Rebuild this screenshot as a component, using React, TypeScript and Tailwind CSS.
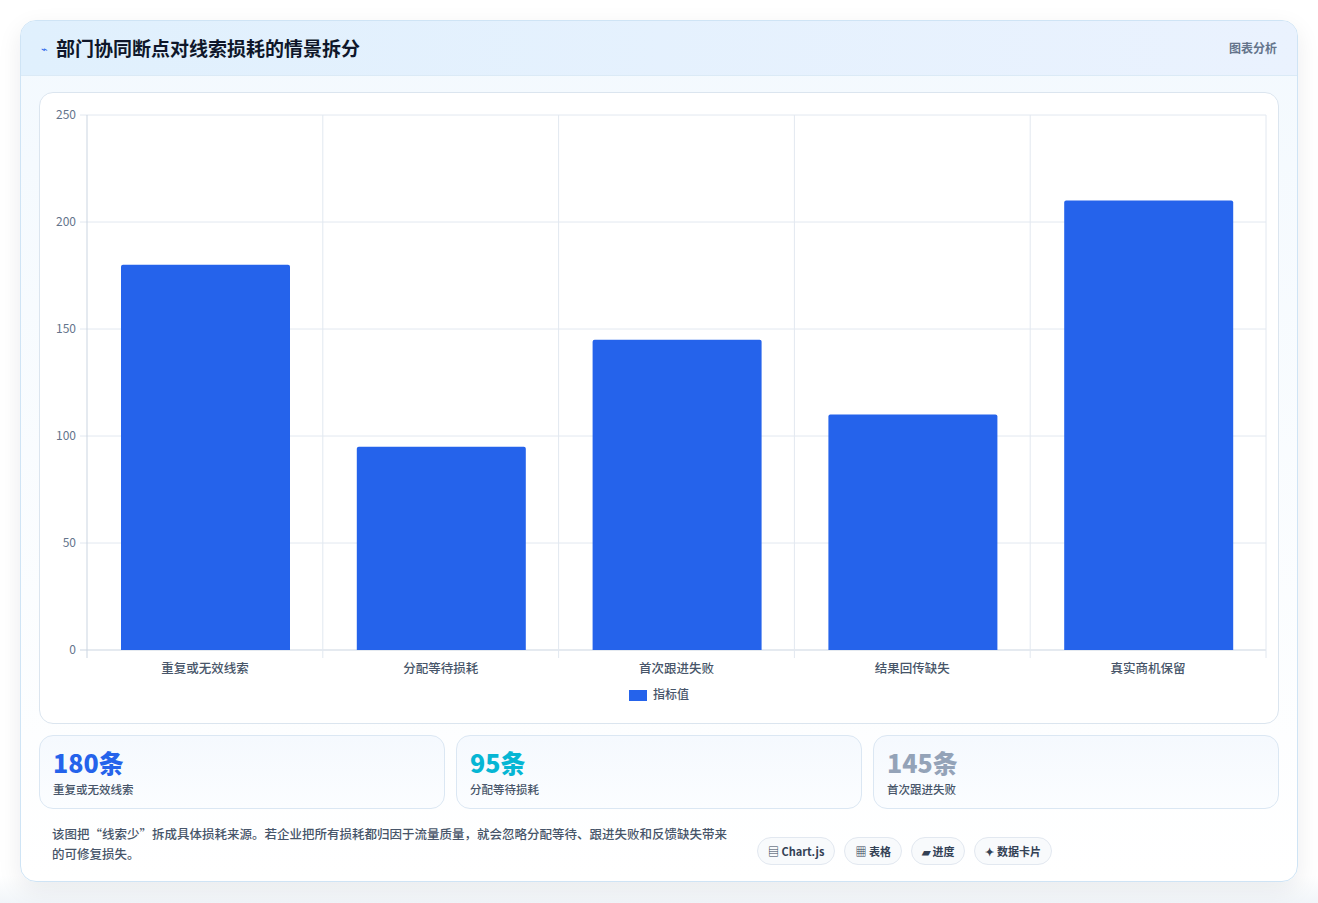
import React from "react";

const data = [
  ["重复或无效线索", 180],
  ["分配等待损耗", 95],
  ["首次跟进失败", 145],
  ["结果回传缺失", 110],
  ["真实商机保留", 210],
] as const;

function Chart() {
  const L = 47, R = 1226, T = 22, B = 557;
  const cw = (R - L) / 5;
  const sc = (B - T) / 250;
  return (
    <svg width="1236" height="628" className="block" style={{ fontFamily: '"Noto Sans CJK SC", "Liberation Sans", sans-serif' }}>
      {[0, 50, 100, 150, 200, 250].map((v) => {
        const y = B - v * sc;
        return (
          <g key={v}>
            <line x1={L - 7} x2={R} y1={y} y2={y} stroke={v === 0 ? "#cbd5e1" : "#e2e8f0"} />
            <text x={36} y={y + 4} textAnchor="end" fontSize="12" fill="#64748b">{v}</text>
          </g>
        );
      })}
      {[0, 1, 2, 3, 4, 5].map((i) => (
        <line key={i} x1={L + i * cw} x2={L + i * cw} y1={T} y2={B + 8} stroke={i === 0 ? "#cbd5e1" : "#e2e8f0"} />
      ))}
      {data.map(([n, v], i) => {
        const x = L + i * cw + 34;
        const h = v * sc;
        return (
          <g key={n}>
            <path d={`M${x} ${B} V${B - h + 2} Q${x} ${B - h} ${x + 2} ${B - h} H${x + 167} Q${x + 169} ${B - h} ${x + 169} ${B - h + 2} V${B} Z`} fill="#2563eb" />
            <text x={L + i * cw + cw / 2} y={580} textAnchor="middle" fontSize="12.5" fontWeight="500" fill="#475569">{n}</text>
          </g>
        );
      })}
      <rect x={589} y={597} width={18} height={11} fill="#2563eb" />
      <text x={613} y={606} fontSize="12" fontWeight="500" fill="#475569">指标值</text>
    </svg>
  );
}

const stats = [
  ["180条", "重复或无效线索", "text-[#2563eb]"],
  ["95条", "分配等待损耗", "text-[#06b6d4]"],
  ["145条", "首次跟进失败", "text-[#94a3b8]"],
];

export default function App() {
  return (
    <div className="w-[1318px] h-[903px] bg-[#f1f5f9] p-[20px] pt-[20px]" style={{ fontFamily: '"Noto Sans CJK SC", "Liberation Sans", sans-serif', background: "linear-gradient(180deg,#ffffff 0%,#ffffff 97%,#f1f5f9 100%)" }}>
      <div className="w-[1278px] h-[862px] rounded-[16px] border border-[#cfe4f5] bg-gradient-to-b from-[#f3f9fe] to-white shadow-[0_8px_24px_rgba(15,23,42,0.08)] overflow-hidden flex flex-col">
        <div className="h-[55px] shrink-0 flex items-center justify-between px-[20px] bg-gradient-to-r from-[#e0f0fd] to-[#eaf2fe] border-b border-[#dbeaf6]">
          <div className="flex items-center gap-[8px]">
            <span className="text-[#2563eb] text-[11px]">⌁</span>
            <span className="text-[19px] font-bold text-[#0f172a]">部门协同断点对线索损耗的情景拆分</span>
          </div>
          <span className="text-[12px] font-semibold text-[#64748b]">图表分析</span>
        </div>
        <div className="flex-1 flex flex-col px-[18px] pt-[16px]">
          <div className="h-[632px] rounded-[14px] border border-[#dbe5ef] bg-white">
            <Chart />
          </div>
          <div className="grid grid-cols-3 gap-[11px] mt-[11px]">
            {stats.map(([a, b, c]) => (
              <div key={b} className="h-[74px] rounded-[14px] border border-[#dbe7f3] bg-gradient-to-b from-[#f5f9fe] to-[#fbfdff] px-[13px] pt-[9px]">
                <div className={`text-[25px] font-extrabold leading-[34px] ${c}`}>{a}</div>
                <div className="text-[11.5px] text-[#475569] font-medium mt-[2px]">{b}</div>
              </div>
            ))}
          </div>
          <div className="flex items-center mt-[14px] px-[13px]">
            <p className="w-[680px] text-[12.5px] leading-[20px] text-[#475569] font-medium">该图把“线索少”拆成具体损耗来源。若企业把所有损耗都归因于流量质量，就会忽略分配等待、跟进失败和反馈缺失带来的可修复损失。</p>
            <div className="flex gap-[9px] ml-[25px] mt-[14px]">
              {["▤ Chart.js", "▦ 表格", "▰ 进度", "✦ 数据卡片"].map((t) => (
                <span key={t} className="h-[28px] px-[10px] flex items-center rounded-full border border-[#e2e8f0] bg-[#f8fafc] text-[11px] font-bold text-[#334155]">{t}</span>
              ))}
            </div>
          </div>
        </div>
      </div>
    </div>
  );
}
